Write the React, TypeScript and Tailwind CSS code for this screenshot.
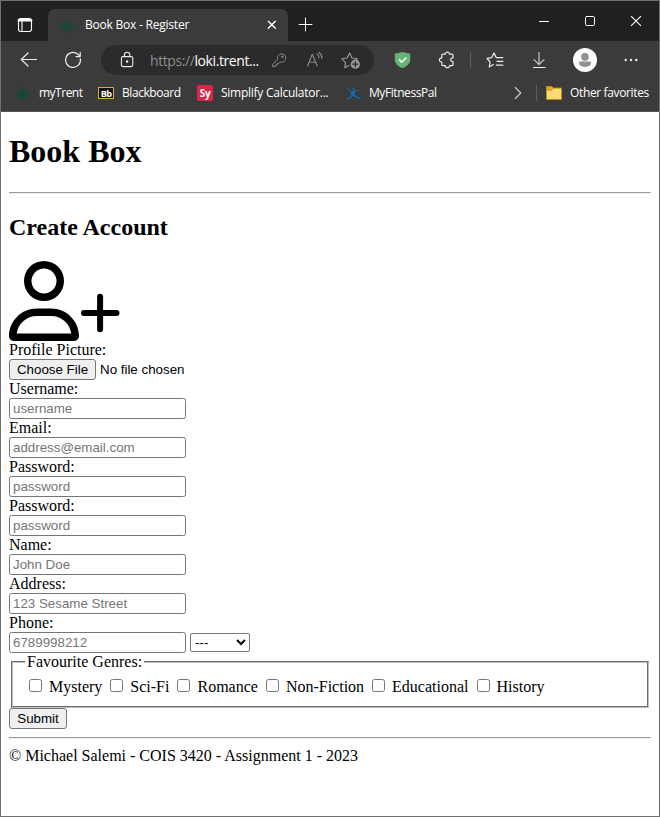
import React from "react";

const line = { fill: "none", stroke: "currentColor", strokeLinecap: "round", strokeLinejoin: "round" } as const;

function TreeLogo() {
  return (
    <svg className="h-4 w-4 shrink-0 text-[#1a4733]" viewBox="0 0 16 16" fill="currentColor">
      <path d="M7.6 0.8 8.6 3.6 9.6 5.6 9.2 7 11.8 5.8 11.9 7.2 15.2 7 13.4 9.4 13.6 11 11.2 12.6 9.8 14.2 8.2 14.2V15.4H7.2V14.2L5.6 14.2 4 12.6 1.8 11 2.2 9.4.6 7 3.8 7.2 4 5.8 6.4 7 5.8 5.6 6.8 3.6z" />
    </svg>
  );
}

function TabStrip() {
  return (
    <div className="flex h-10 items-end bg-[#202020] text-white">
      <svg className="mb-2 ml-4 h-4 w-4" viewBox="0 0 16 16" {...line} strokeWidth="1.1">
        <rect x="1.5" y="1.5" width="13" height="13" rx="2.4" />
        <path d="M2 3.2h12" strokeWidth="2.6" />
        <path d="M5 4.5v9.8" />
      </svg>
      <div className="ml-[15px] flex h-8 w-60 items-center rounded-t-[7px] bg-[#3b3b3b] pl-[11px]">
        <TreeLogo />
        <span className="ml-[10px] w-[177px] whitespace-nowrap text-[12px] tracking-[-0.22px]">Book Box - Register</span>
        <svg className="ml-[5px] h-[10px] w-[10px]" viewBox="0 0 10 10" {...line} strokeWidth="1.3">
          <path d="m1.3 1.3 7 7M8.3 1.3l-7 7" />
        </svg>
      </div>
      <svg className="mb-2 ml-[10px] h-4 w-4" viewBox="0 0 16 16" {...line}>
        <path d="M7.5 1v13M1 7.5h13" />
      </svg>
      <div className="mb-[11px] ml-auto mr-[15px] flex items-center gap-[30px] self-end pb-[1px]">
        <svg className="h-4 w-4" viewBox="0 0 16 16" {...line}><path d="M3.5 8.5h9" /></svg>
        <svg className="h-4 w-4" viewBox="0 0 16 16" {...line}><rect x="3.5" y="3.5" width="9" height="9" rx="1.2" /></svg>
        <svg className="h-4 w-4" viewBox="0 0 16 16" {...line} strokeWidth="1.1"><path d="m3.3 3.3 9.4 9.4M12.7 3.3l-9.4 9.4" /></svg>
      </div>
    </div>
  );
}

function Toolbar() {
  return (
    <div className="flex h-[38px] items-center text-[#ececec]">
      <svg className="ml-[18px] h-5 w-5" viewBox="0 0 20 20" {...line} strokeWidth="1.2">
        <path d="M17.5 9.5h-15M9 3 2.3 9.5 9 16" />
      </svg>
      <svg className="ml-[24px] h-5 w-5" viewBox="0 0 20 20" {...line} strokeWidth="1.2">
        <path d="M17.4 8.8A7.5 7.5 0 1 1 14.8 4.2L17 6.4M17.2 2.4v4.2H13" />
      </svg>
      <div className="ml-[18px] flex h-[30px] w-[273px] items-center rounded-full bg-[#2b2b2b]">
        <svg className="ml-4 h-5 w-5" viewBox="0 0 20 20" {...line} strokeWidth="1.1">
          <rect x="4.4" y="6.6" width="11.4" height="10" rx="1.8" />
          <path d="M7.4 6.4V5a2.7 2.7 0 0 1 5.4 0v1.4" />
          <circle cx="10.1" cy="11.6" r=".7" fill="currentColor" />
        </svg>
        <span className="ml-[13px] w-[112px] whitespace-nowrap text-[14px] tracking-[-0.41px] text-white">
          <span className="text-[#8d8d8d]">https://</span>loki.trent...
        </span>
        <svg className="ml-[8px] h-[18px] w-[18px] text-[#888]" viewBox="0 0 18 18" {...line}>
          <path d="M2.7 13.2 7.6 8.4a4.2 4.2 0 1 1 2.6 2.6L8.8 12.4H7.2V14H5.4V15.4H2.7z" />
          <circle cx="12.2" cy="5.8" r=".8" />
        </svg>
        <svg className="ml-[16px] h-5 w-[22px] text-[#888]" viewBox="0 0 22 20" {...line} strokeWidth="1.15">
          <path d="M3.5 16 8.3 4.3 13.2 16M5.1 12.2h6.4M13 3.8q2 1.5 2 4M15 2.3q3 2.5 3 6" />
        </svg>
        <svg className="ml-[14px] h-[22px] w-[22px] text-[#999]" viewBox="0 0 22 22" {...line} strokeWidth="1.15">
          <path d="m9 16.6-4.2 2.2.8-5.2-3.8-3.8 5.3-.8L9.6 3.9l2.4 5.1 5.3.8-.8.8" />
          <circle cx="15.3" cy="15.2" r="4.6" fill="currentColor" stroke="none" />
          <path d="M15.3 12.7v5M12.8 15.2h5" stroke="#2b2b2b" strokeWidth="1.3" />
        </svg>
      </div>
      <svg className="ml-[18px] h-5 w-5" viewBox="0 0 20 20" fill="none">
        <path d="M10.5 2c2.6.9 5 1.3 7.7 1.4v5.8c0 4-2.6 6.8-7.7 9.1-5.1-2.3-7.7-5.1-7.7-9.1V3.4C5.5 3.3 7.9 2.9 10.5 2z" fill="#66b574" />
        <path d="m7.1 9.4 2.7 2.8 4.6-4.7" stroke="#fff" strokeWidth="1.6" />
      </svg>
      <svg className="ml-[24px] h-5 w-5" viewBox="0 0 20 20" {...line} strokeWidth="1.2">
        <path d="M6.8 4.2H9.3C9.1 1.4 13.7 1.4 13.5 4.2H16q1 0 1 1V7.9C14 7.6 14 12 17 11.7V14.6q0 1-1 1H13.5C13.7 18.4 9.1 18.4 9.3 15.6H6.8q-1 0-1-1V12C2.6 12.2 2.6 7.7 5.8 7.9V5.2q0-1 1-1z" />
      </svg>
      <div className="ml-[14px] h-4 w-px bg-[#5d5d5d]" />
      <svg className="ml-[14px] h-5 w-[22px]" viewBox="0 0 22 20" {...line} strokeWidth="1.2">
        <path d="m8.3 14.6-4 2.3.8-4.9L2 8.4l4.6-.7L9 3l2.2 4.6h6.6M12 11.4h5.8M11.4 15.2h6.4" />
      </svg>
      <svg className="ml-[22px] h-5 w-5" viewBox="0 0 20 20" {...line} strokeWidth="1.2">
        <path d="M10 2.5v12M5 9.6l5 5 5-5" stroke="#c8c8c8" /><path d="M4.5 17.5h11.5" />
      </svg>
      <svg className="ml-[24px] h-6 w-6" viewBox="0 0 24 24">
        <circle cx="12" cy="12" r="12" fill="#fbfbfb" />
        <circle cx="12" cy="8.9" r="3.8" fill="#909090" />
        <path d="M6 14.8q0-1.2 1.2-1.2h9.6q1.2 0 1.2 1.2 0 4.1-6 4.1t-6-4.1z" fill="#909090" />
      </svg>
      <svg className="ml-[24px] h-5 w-5" viewBox="0 0 20 20" fill="currentColor">
        <circle cx="4.7" cy="10" r="1.2" /><circle cx="10" cy="10" r="1.2" /><circle cx="15.3" cy="10" r="1.2" />
      </svg>
    </div>
  );
}

function FavoritesBar() {
  return (
    <div className="flex h-8 items-center whitespace-nowrap pb-[4px] text-[12px] text-white">
      <div className="ml-[14px] flex"><TreeLogo /></div>
      <span className="ml-[8px] w-[43px] tracking-[-0.5px]">myTrent</span>
      <span className="ml-[16px] flex h-3 w-4 items-center justify-center border border-[#d7ab3e] bg-[#161616] text-[9px] font-bold leading-none tracking-[-0.5px]">Bb</span>
      <span className="ml-[8px] w-[59px] tracking-[-0.43px]">Blackboard</span>
      <span className="ml-[16px] flex h-4 w-4 items-center justify-center rounded-[2px] bg-[#d92649] text-[10px] font-bold leading-none tracking-[-0.3px]">Sy</span>
      <span className="ml-[8px] w-[108px] tracking-[-0.26px]">Simplify Calculator...</span>
      <svg className="ml-[16px] h-4 w-4" viewBox="0 0 16 16" fill="none" stroke="#126eb4" strokeLinecap="round" strokeLinejoin="round">
        <path d="M1.7 3.6 6.4 6.8M9.8 6.6l3.4-1.4" strokeWidth=".9" />
        <path d="m6.4 6.8 3.4-.2-.6 3.6-1.6.6z" fill="#126eb4" />
        <path d="M7.8 10.4q-2 2.6-5.6 3.3M9 10.2q2.2 2.4 5.6 2.8" strokeWidth="1.4" />
        <circle cx="8.6" cy="4.3" r="1.1" fill="#126eb4" stroke="none" />
      </svg>
      <span className="ml-[8px] w-[68px] tracking-[-0.43px]">MyFitnessPal</span>
      <svg className="ml-[76px] h-[14px] w-[10px] text-[#c8c8c8]" viewBox="0 0 10 14" {...line} strokeWidth="1.2">
        <path d="m2.3 1.5 5.5 5.5-5.5 5.5" />
      </svg>
      <div className="ml-[13px] h-4 w-px bg-[#5d5d5d]" />
      <svg className="ml-[9px] h-4 w-4" viewBox="0 0 16 16">
        <path d="M.5 14.5v-13h5.2l1.8 1.6h8v11.4z" fill="#ffdc73" stroke="#b8891c" />
        <path d="M1 2h4.5l1.6 1.4L5.6 5H1z" fill="#e6ad28" />
        <path d="M1 5.2h4.8l1.7-1.7" fill="none" stroke="#a87b18" strokeWidth=".7" />
      </svg>
      <span className="ml-2 tracking-[-0.36px]">Other favorites</span>
    </div>
  );
}

function AddUserIcon() {
  return (
    <svg className="block h-20 w-28" viewBox="0 0 112 80">
      <path transform="scale(.15625)" d="M304 128a80 80 0 1 0-160 0 80 80 0 1 0 160 0zM96 128a128 128 0 1 1 256 0A128 128 0 1 1 96 128zM49.3 464H398.7c-8.9-63.3-63.3-112-129-112H178.3c-65.7 0-120.1 48.7-129 112zM0 482.3C0 383.8 79.8 304 178.3 304h91.4C368.2 304 448 383.8 448 482.3c0 16.4-13.3 29.7-29.7 29.7H29.7C13.3 512 0 498.7 0 482.3z" />
      <path d="M75 52h32.5M91.1 35.7v32.5" stroke="#000" strokeWidth="6" strokeLinecap="round" />
    </svg>
  );
}

const inputClass =
  "block h-[21px] w-[177px] rounded-[2.5px] border border-[#767676] bg-white px-[3px] py-px font-['Liberation_Sans',Arial,sans-serif] text-[13.333px] leading-normal placeholder:text-[#757575]";
const buttonClass =
  "block h-[21px] rounded-[3px] border border-[#767676] bg-[#efefef] font-['Liberation_Sans',Arial,sans-serif] text-[13.333px] leading-none";

const fields = [
  { label: "Username:", placeholder: "username", type: "text" },
  { label: "Email:", placeholder: "address@email.com", type: "email" },
  { label: "Password:", placeholder: "password", type: "password" },
  { label: "Password:", placeholder: "password", type: "password" },
  { label: "Name:", placeholder: "John Doe", type: "text" },
  { label: "Address:", placeholder: "123 Sesame Street", type: "text" },
];
const genres = ["Mystery", "Sci-Fi", "Romance", "Non-Fiction", "Educational", "History"];

function Rule() {
  return <hr className="border border-b-[#eeeeee] border-l-[#9a9a9a] border-r-[#eeeeee] border-t-[#9a9a9a]" />;
}

function Page() {
  return (
    <main className="flex-1 bg-white px-2 font-['Liberation_Serif','Times_New_Roman',serif] text-[16px] leading-[18px] text-black">
      <h1 className="mb-[22px] mt-[21px] text-[32px] font-bold leading-[37px]">Book Box</h1>
      <Rule />
      <h2 className="my-5 text-[24px] font-bold leading-[27px]">Create Account</h2>
      <AddUserIcon />
      <form onSubmit={(e) => e.preventDefault()}>
        <div>Profile Picture:</div>
        <div className="flex items-center">
          <button type="button" className={buttonClass + " w-[87px]"}>Choose File</button>
          <span className="ml-1 font-['Liberation_Sans',Arial,sans-serif] text-[13.333px]">No file chosen</span>
        </div>
        {fields.map((f, i) => (
          <label key={i} className="block w-[177px]">
            {f.label}
            <input className={inputClass} type={f.type} placeholder={f.placeholder} />
          </label>
        ))}
        <div>Phone:</div>
        <div className="flex items-center gap-1">
          <input className={inputClass} type="tel" placeholder="6789998212" />
          <select className="h-[19px] w-[60px] rounded-[2px] border border-[#767676] bg-white font-['Liberation_Sans',Arial,sans-serif] text-[13.333px] leading-none">
            <option>---</option>
          </select>
        </div>
        <fieldset className="mx-0.5 h-[55px] border-2 border-[#c0c0c0] px-3 [border-style:groove]">
          <legend className="px-0.5">Favourite Genres:</legend>
          <div className="flex pt-[7px]">
            {genres.map((g) => (
              <label key={g} className="mr-1 flex">
                <input type="checkbox" className="ml-1 mr-[7px] mt-px h-[13px] w-[13px]" />
                {g}
              </label>
            ))}
          </div>
        </fieldset>
        <button type="submit" className={buttonClass + " w-[58px]"}>Submit</button>
      </form>
      <div className="my-2"><Rule /></div>
      <footer>© Michael Salemi - COIS 3420 - Assignment 1 - 2023</footer>
    </main>
  );
}

export default function App() {
  return (
    <div className="flex h-[817px] w-[660px] flex-col overflow-hidden border border-[#707070]">
      <header className="h-[111px] border-b border-[#555] bg-[#3b3b3b] font-['Open_Sans','Noto_Sans',sans-serif]">
        <TabStrip />
        <Toolbar />
        <FavoritesBar />
      </header>
      <Page />
    </div>
  );
}
